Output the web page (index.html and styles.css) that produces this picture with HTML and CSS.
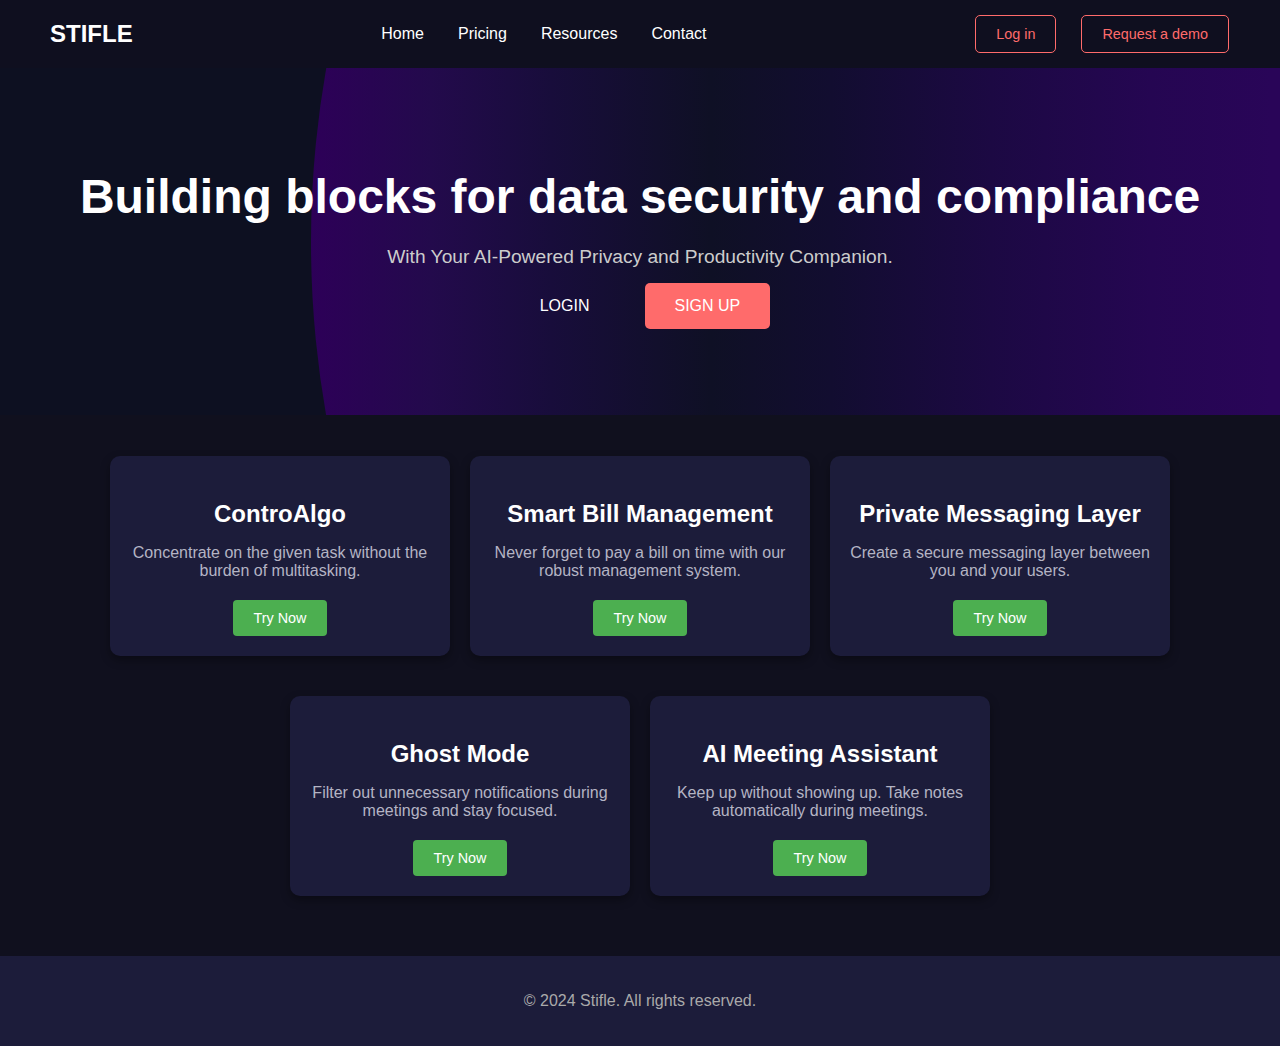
FILE: index.html
```html
<!DOCTYPE html>
<html lang="en">
<head>
<meta charset="utf-8">
<title>Stifle</title>
<link rel="stylesheet" href="styles.css">
</head>
<body>
<header class="nav">
  <div class="logo">STIFLE</div>
  <nav class="links">
    <a href="#">Home</a>
    <a href="#">Pricing</a>
    <a href="#">Resources</a>
    <a href="#">Contact</a>
  </nav>
  <div class="actions">
    <a class="btn-outline" href="#">Log in</a>
    <a class="btn-outline" href="#">Request a demo</a>
  </div>
</header>

<section class="hero">
  <div class="hero-content">
    <h1>Building blocks for data security and compliance</h1>
    <p class="subtitle">With Your AI-Powered Privacy and Productivity Companion.</p>
    <div class="hero-buttons">
      <a class="btn-login" href="#">LOGIN</a>
      <a class="btn-signup" href="#">SIGN UP</a>
    </div>
  </div>
</section>

<main class="features">
  <div class="card">
    <h3>ControAlgo</h3>
    <p>Concentrate on the given task without the burden of multitasking.</p>
    <a class="try" href="#">Try Now</a>
  </div>
  <div class="card">
    <h3>Smart Bill Management</h3>
    <p>Never forget to pay a bill on time with our robust management system.</p>
    <a class="try" href="#">Try Now</a>
  </div>
  <div class="card">
    <h3>Private Messaging Layer</h3>
    <p>Create a secure messaging layer between you and your users.</p>
    <a class="try" href="#">Try Now</a>
  </div>
  <div class="card">
    <h3>Ghost Mode</h3>
    <p>Filter out unnecessary notifications during meetings and stay focused.</p>
    <a class="try" href="#">Try Now</a>
  </div>
  <div class="card">
    <h3>AI Meeting Assistant</h3>
    <p>Keep up without showing up. Take notes automatically during meetings.</p>
    <a class="try" href="#">Try Now</a>
  </div>
</main>

<footer class="footer">
  <p>© 2024 Stifle. All rights reserved.</p>
</footer>
</body>
</html>
```

FILE: styles.css
```css
* {
  box-sizing: border-box;
}

body {
  margin: 0;
  background: #10101e;
  color: #ffffff;
  font-family: "Liberation Sans", Arial, sans-serif;
}

a {
  text-decoration: none;
}

.nav {
  display: flex;
  align-items: center;
  justify-content: space-between;
  height: 68px;
  padding: 0 51px 0 50px;
  background: #0f0f1f;
}

.logo {
  font-size: 24px;
  font-weight: bold;
  color: #ffffff;
}

.links {
  display: flex;
  gap: 34px;
}

.links a {
  color: #ffffff;
  font-size: 16px;
}

.actions {
  display: flex;
  gap: 25px;
  margin-left: 20px;
}

.btn-outline {
  display: inline-block;
  padding: 10px 20px;
  border: 1px solid #ff6b6b;
  border-radius: 5px;
  color: #ff6b6b;
  font-size: 14.4px;
  line-height: 16px;
  height: 38px;
}

.hero {
  position: relative;
  overflow: hidden;
  height: 347px;
  background: #0d1021;
  text-align: center;
}

.hero::before {
  content: "";
  position: absolute;
  left: 311px;
  top: 50%;
  width: 2000px;
  height: 2000px;
  margin-top: -1000px;
  border-radius: 50%;
  background: linear-gradient(90deg,
    #2d0058 0%,
    #230a4c 6%,
    #180d3b 12%,
    #0f1025 20%,
    #120d30 26%,
    #1c0943 34%,
    #250652 42%,
    #290558 48%,
    #2a0558 100%);
}

.hero-content {
  position: relative;
  padding-top: 100px;
}

.hero h1 {
  margin: 0 0 20px;
  font-size: 48px;
  line-height: 58px;
  font-weight: bold;
}

.subtitle {
  margin: 0 0 15px;
  font-size: 19.2px;
  line-height: 22px;
  color: #cccccc;
}

.hero-buttons {
  display: flex;
  justify-content: center;
  gap: 25px;
}

.btn-login,
.btn-signup {
  display: inline-block;
  padding: 14px 30px;
  font-size: 16px;
  line-height: 18px;
  border-radius: 5px;
  color: #ffffff;
}

.btn-signup {
  background: #ff6b6b;
}

.features {
  display: flex;
  flex-wrap: wrap;
  justify-content: center;
  gap: 40px 20px;
  max-width: 1060px;
  margin: 0 auto;
  padding: 41px 0 60px;
}

.card {
  width: 340px;
  height: 200px;
  padding: 20px;
  background: #1c1c3a;
  border-radius: 10px;
  box-shadow: 0 4px 10px rgba(0, 0, 0, 0.35);
  text-align: center;
}

.card h3 {
  margin: 24px 0 16px;
  font-size: 24px;
  line-height: 28px;
  font-weight: bold;
  color: #ffffff;
}

.card p {
  margin: 0 0 20px;
  font-size: 16px;
  line-height: 18px;
  color: #b4b4c4;
}

.try {
  display: inline-block;
  padding: 10px 20px;
  background: #4caf50;
  border-radius: 4px;
  color: #ffffff;
  font-size: 14.4px;
  line-height: 16px;
}

.footer {
  height: 90px;
  background: #1c1c3a;
  display: flex;
  align-items: center;
  justify-content: center;
}

.footer p {
  margin: 0;
  font-size: 16px;
  color: #aaaaaa;
}
```
